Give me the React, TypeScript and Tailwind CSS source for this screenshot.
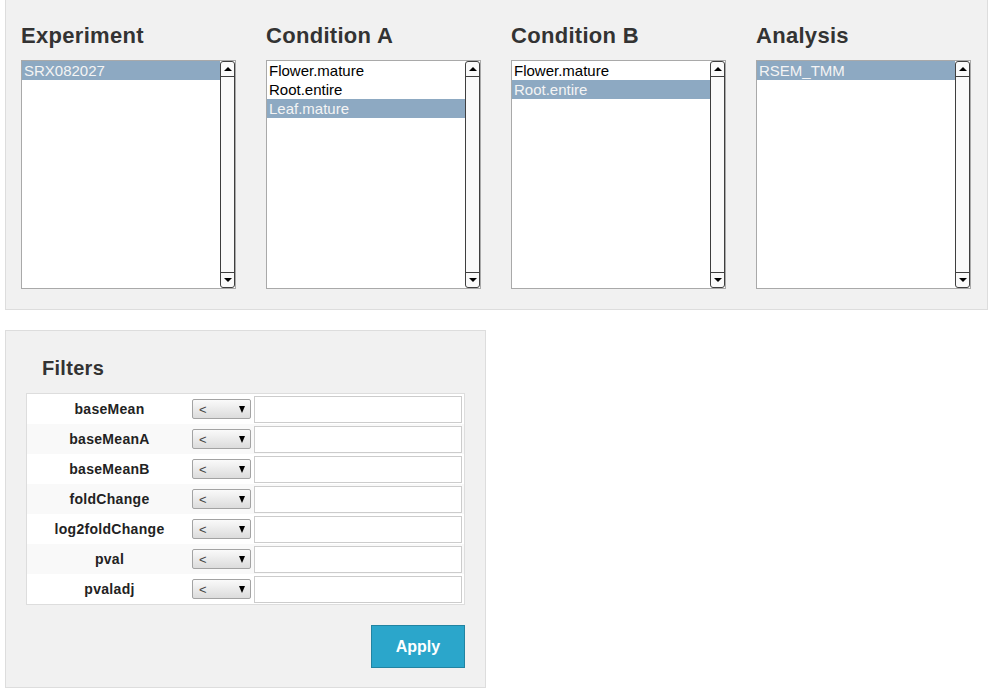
const columns = [
  { title: "Experiment", items: ["SRX082027"], selected: 0 },
  { title: "Condition A", items: ["Flower.mature", "Root.entire", "Leaf.mature"], selected: 2 },
  { title: "Condition B", items: ["Flower.mature", "Root.entire"], selected: 1 },
  { title: "Analysis", items: ["RSEM_TMM"], selected: 0 },
];

const filters = ["baseMean", "baseMeanA", "baseMeanB", "foldChange", "log2foldChange", "pval", "pvaladj"];

function ScrollBar() {
  return (
    <div className="flex w-[15px] flex-col rounded-[3px] border border-[#3f3f3f] bg-[#fafafa]">
      <div className="flex h-[15px] items-center justify-center border-b border-[#3f3f3f]">
        <div className="h-0 w-0 border-x-[4px] border-b-[4px] border-x-transparent border-b-black" />
      </div>
      <div className="flex-1" />
      <div className="flex h-[15px] items-center justify-center border-t border-[#3f3f3f]">
        <div className="h-0 w-0 border-x-[4px] border-t-[4px] border-x-transparent border-t-black" />
      </div>
    </div>
  );
}

function ListBox({ items, selected }: { items: string[]; selected: number }) {
  return (
    <div className="flex h-[229px] w-[215px] border border-[#a9a9a9] bg-white">
      <div className="flex-1">
        {items.map((item, i) => (
          <div
            key={item}
            className={
              i === selected
                ? "h-[19px] bg-[#8da9c2] pl-[2px] text-[15px] leading-[19px] text-[#f4f4f4]"
                : "h-[19px] pl-[2px] text-[15px] leading-[19px] text-black"
            }
          >
            {item}
          </div>
        ))}
      </div>
      <ScrollBar />
    </div>
  );
}

function Select() {
  return (
    <div className="flex h-[20px] w-[59px] items-center justify-between rounded-[2px] border border-[#a3a3a3] bg-gradient-to-b from-[#fafafa] to-[#dcdcdc] pl-[6px] pr-[5px] text-[13px] text-[#444]">
      <span className="leading-none">&lt;</span>
      <div className="h-0 w-0 border-x-[3.5px] border-t-[7px] border-x-transparent border-t-black" />
    </div>
  );
}

export default function App() {
  return (
    <div className="min-h-[694px] bg-white font-['Liberation_Sans',Arial,sans-serif]">
      <div className="mx-[5px] border border-t-0 border-[#dddddd] bg-[#f1f1f1] px-[15px] pb-[20px] pt-[25px]">
        <div className="flex gap-[30px]">
          {columns.map((col) => (
            <div key={col.title}>
              <h2 className="text-[22px] font-bold leading-[22px] tracking-[0.3px] text-[#333]">
                {col.title}
              </h2>
              <div className="mt-[13px]">
                <ListBox items={col.items} selected={col.selected} />
              </div>
            </div>
          ))}
        </div>
      </div>

      <div className="ml-[5px] mt-[20px] w-[481px] border border-[#dddddd] bg-[#f1f1f1] px-[20px] pb-[19px] pt-[27px]">
        <h2 className="pl-[16px] text-[20px] font-bold leading-[20px] tracking-[0.3px] text-[#333]">Filters</h2>
        <div className="mt-[15px] border border-[#dddddd] bg-white">
          {filters.map((f, i) => (
            <div
              key={f}
              className={i % 2 === 0 ? "flex h-[30px] items-center bg-white" : "flex h-[30px] items-center bg-[#f9f9f9]"}
            >
              <div className="w-[165px] text-center text-[14px] font-bold tracking-[0.3px] text-[#222]">{f}</div>
              <Select />
              <div className="ml-[3px] h-[27px] w-[208px] border border-[#cccccc] bg-white" />
            </div>
          ))}
        </div>
        <div className="mt-[20px] flex justify-end">
          <button className="h-[43px] w-[94px] border border-[#2284a2] bg-[#2ba6cb] text-[16px] font-bold text-white">
            Apply
          </button>
        </div>
      </div>
    </div>
  );
}
